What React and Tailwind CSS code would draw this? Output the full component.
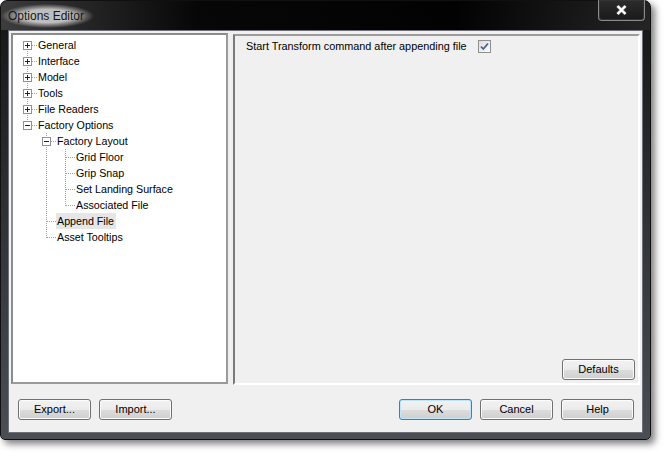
import React from 'react';

const font = "font-['Liberation_Sans',Arial,sans-serif]";

// tree rows: each cell = connector type + optional box (+ / -)
const rows = [
  { label: 'General', cells: ['F+'] },
  { label: 'Interface', cells: ['T+'] },
  { label: 'Model', cells: ['T+'] },
  { label: 'Tools', cells: ['T+'] },
  { label: 'File Readers', cells: ['T+'] },
  { label: 'Factory Options', cells: ['L-'] },
  { label: 'Factory Layout', cells: [' ', 'T-'] },
  { label: 'Grid Floor', cells: [' ', 'I', 'T'] },
  { label: 'Grip Snap', cells: [' ', 'I', 'T'] },
  { label: 'Set Landing Surface', cells: [' ', 'I', 'T'] },
  { label: 'Associated File', cells: [' ', 'I', 'L'] },
  { label: 'Append File', cells: [' ', 'T'], selected: true },
  { label: 'Asset Tooltips', cells: [' ', 'L'] },
];

const dot = { stroke: '#a0a0a0', strokeWidth: 1, strokeDasharray: '1 1' };

const Cell = ({ spec }) => {
  const type = spec[0];
  const box = spec[1];
  return (
    <svg width="19" height="16" className="shrink-0 block">
      {(type === 'T' || type === 'I') && <line x1="9.5" y1="0" x2="9.5" y2="16" style={dot} />}
      {type === 'L' && <line x1="9.5" y1="0" x2="9.5" y2="9" style={dot} />}
      {type === 'F' && <line x1="9.5" y1="8" x2="9.5" y2="16" style={dot} />}
      {'TLF'.includes(type) && <line x1="10" y1="8.5" x2="19" y2="8.5" style={dot} />}
      {box && (
        <g>
          <rect x="5.5" y="4.5" width="8" height="8" fill="#fff" stroke="#919191" />
          <line x1="7" y1="8.5" x2="12" y2="8.5" stroke="#202020" />
          {box === '+' && <line x1="9.5" y1="6" x2="9.5" y2="11" stroke="#202020" />}
        </g>
      )}
    </svg>
  );
};

const Btn = ({ children, primary }) => (
  <button
    className={`h-[21px] w-[73px] shrink-0 rounded-[3px] border text-[11px] text-black leading-none bg-[linear-gradient(#f2f2f2_0%,#ebebeb_50%,#dddddd_50%,#cfcfcf_100%)] ${
      primary
        ? 'border-[#3c7fb1] shadow-[inset_0_0_0_1px_#bfe6f8]'
        : 'border-[#707070] shadow-[inset_0_0_0_1px_#fbfbfb]'
    }`}
  >
    {children}
  </button>
);

export default function App() {
  return (
    <div className={`w-[667px] h-[456px] bg-white ${font}`}>
      <div className="w-[651px] h-[440px] flex flex-col rounded-t-[7px] rounded-b-[5px] border border-[#101010] bg-[linear-gradient(#151515,#2a2c30_40%,#4b4f55)] shadow-[4px_4px_7px_rgba(0,0,0,0.5)]">
        {/* title bar */}
        <div className="h-[29px] shrink-0 flex items-start justify-between rounded-t-[6px] bg-[linear-gradient(to_right,rgba(70,70,70,0.8),rgba(5,5,5,0.9)_30%,rgba(0,0,0,0.9)_70%,rgba(45,45,45,0.6))]">
          <div className="mt-[3px] pl-[7px] pr-[10px] h-[24px] flex items-center text-[12px] text-[#151515] bg-[radial-gradient(closest-side,rgba(215,215,215,0.85)_55%,rgba(215,215,215,0)_100%)]">
            Options Editor
          </div>
          <div className="mr-[5px] -mt-[1px] w-[47px] h-[21px] flex items-center justify-center rounded-b-[4px] border border-[#8a8a8a] border-t-0 bg-[linear-gradient(#2c2c2c,#1a1a1a)] shadow-[inset_0_0_0_1px_#333]">
            <svg width="11" height="10" viewBox="0 0 11 10">
              <path d="M1.5 1 L9.5 9 M9.5 1 L1.5 9" stroke="#6a6a6a" strokeWidth="3.6" />
              <path d="M1.5 1 L9.5 9 M9.5 1 L1.5 9" stroke="#fff" strokeWidth="2.4" />
            </svg>
          </div>
        </div>

        {/* client area */}
        <div className="mx-[7px] mb-[6px] flex-1 flex flex-col bg-[#f0f0f0] border border-[#6d7177] pt-[2px] px-[2px]">
          <div className="flex gap-[5px] h-[352px]">
            {/* tree */}
            <div className="w-[217px] h-[351px] bg-white border-2 border-t-[#8a8c8f] border-l-[#8a8c8f] border-r-[#9a9b9d] border-b-[#9a9b9d] pt-[2px] pl-[5px] text-[10.7px] text-black">
              {rows.map((r) => (
                <div key={r.label} className="flex h-[16px] items-center">
                  {r.cells.map((c, i) => (
                    <Cell key={i} spec={c} />
                  ))}
                  <span className={`leading-[16px] pl-[1px] pr-[2px] whitespace-nowrap ${r.selected ? 'bg-[#e6e6e6]' : ''}`}>
                    {r.label}
                  </span>
                </div>
              ))}
            </div>

            {/* options page */}
            <div className="mt-[1px] w-[407px] h-[351px] flex flex-col border-2 border-t-[#9c9c9c] border-l-[#7a7a7a] border-r-white border-b-white">
              <div className="flex items-center h-[16px] mt-[2px] pl-[11px] text-[10.85px] text-black">
                <span>Start Transform command after appending file</span>
                <span className="ml-[11px] w-[13px] h-[13px] flex items-center justify-center border border-[#8e8f8f] bg-[linear-gradient(135deg,#dcdcdc,#fcfcfc)]">
                  <svg width="11" height="11" viewBox="0 0 11 11">
                    <path d="M2 5.5 L4.3 8 L9 2.5" fill="none" stroke="#4a5f9b" strokeWidth="1.8" />
                  </svg>
                </span>
              </div>
              <div className="mt-auto mb-[3px] mr-[3px] flex justify-end">
                <Btn>Defaults</Btn>
              </div>
            </div>
          </div>

          {/* bottom buttons */}
          <div className="mt-[14px] flex gap-[8px] pl-[7px] pr-[6px]">
            <Btn>Export...</Btn>
            <Btn>Import...</Btn>
            <div className="flex-1" />
            <Btn primary>OK</Btn>
            <Btn>Cancel</Btn>
            <Btn>Help</Btn>
          </div>
        </div>
      </div>
    </div>
  );
}
